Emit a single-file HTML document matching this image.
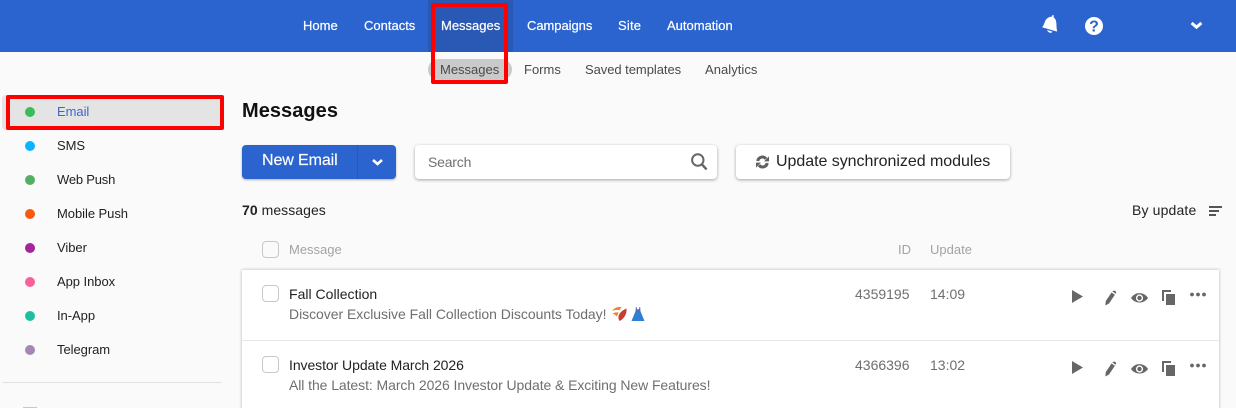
<!DOCTYPE html>
<html lang="en"><head><meta charset="utf-8"><title>Messages</title>
<style>
*{box-sizing:border-box}
html,body{margin:0;padding:0;width:1236px;height:408px;overflow:hidden}
body{background:#fafafa;font-family:"Liberation Sans",Arial,sans-serif;color:#202020}
#w{position:relative;width:1236px;height:408px;overflow:hidden;background:#fafafa}
.a{position:absolute;white-space:nowrap}
.n{color:#fff;font-size:13px;font-weight:400;top:18px;line-height:16px;-webkit-text-stroke:.2px #fff}
.s{color:#4a4a4a;font-size:13px;top:62px;line-height:16px}
.l{left:57px;font-size:13px;line-height:16px;color:#222;letter-spacing:-.05px}
.d{left:25px;width:10px;height:10px;border-radius:50%}
.cb{width:17px;height:17px;border:1px solid #c8c8c8;border-radius:4px;background:#fff}
.g{color:#6f6f6f}
svg{position:absolute;display:block}
</style></head><body><div id="w">
<div class="a" style="left:0;top:0;width:1236px;height:52px;background:#2c64cf"></div>
<div class="a" style="left:428px;top:0;width:85px;height:52px;background:#2a58b5"></div>
<div class="a n" style="left:303px">Home</div>
<div class="a n" style="left:364px">Contacts</div>
<div class="a n" style="left:441px">Messages</div>
<div class="a n" style="left:527px;letter-spacing:-.05px">Campaigns</div>
<div class="a n" style="left:618px;letter-spacing:.2px">Site</div>
<div class="a n" style="left:667px">Automation</div>
<svg style="left:1041px;top:15px" width="18" height="20" viewBox="0 0 18 20"><path d="M1 12.2 C3 10.5 3.5 6.8 5 4.6 C6.5 2.6 8.5 1.7 10.8 1.8 L11.4 0 L12.8.4 L12.6 2.4 C14.6 3.8 15.3 6 15.4 9 C15.5 11.5 15.6 14 16.2 16.6 Z" fill="#fff"/><path d="M6 15 L11.5 16.6 C10.8 18.6 7.2 18.2 6 15Z" fill="#fff"/></svg>
<svg style="left:1085px;top:17px" width="18" height="18" viewBox="0 0 18 18"><circle cx="9" cy="9" r="9" fill="#fff"/><text x="9" y="14.6" text-anchor="middle" font-family="Liberation Sans" font-weight="700" font-size="16" fill="#2c64cf">?</text></svg>
<svg style="left:1190px;top:21px" width="13" height="9" viewBox="0 0 13 9"><path d="M1.6 2 L6.5 6.2 L11.4 2" fill="none" stroke="#fff" stroke-width="3"/></svg>

<div class="a" style="left:428px;top:59px;width:84px;height:21px;border-radius:11px;background:#cacaca"></div>
<div class="a s" style="left:440px">Messages</div>
<div class="a s" style="left:524px">Forms</div>
<div class="a s" style="left:585px;letter-spacing:-.05px">Saved templates</div>
<div class="a s" style="left:705px;letter-spacing:.05px">Analytics</div>
<div class="a" style="left:431px;top:3px;width:77px;height:81px;border:4px solid #f00;border-radius:2px"></div>

<div class="a" style="left:2px;top:95px;width:220px;height:35px;background:#e4e4e4;border-radius:4px"></div>
<div class="a d" style="top:107px;background:#3dbb5a"></div><div class="a l" style="top:104px;color:#3a67c9">Email</div>
<div class="a d" style="top:141px;background:#0bb4ff"></div><div class="a l" style="top:138px">SMS</div>
<div class="a d" style="top:175px;background:#55ad66"></div><div class="a l" style="top:172px;letter-spacing:-.2px">Web Push</div>
<div class="a d" style="top:209px;background:#f85a0c"></div><div class="a l" style="top:206px">Mobile Push</div>
<div class="a d" style="top:243px;background:#a5249c"></div><div class="a l" style="top:240px">Viber</div>
<div class="a d" style="top:277px;background:#f9609a"></div><div class="a l" style="top:274px">App Inbox</div>
<div class="a d" style="top:311px;background:#1cc0a0"></div><div class="a l" style="top:308px">In-App</div>
<div class="a d" style="top:345px;background:#a488b3"></div><div class="a l" style="top:342px">Telegram</div>
<div class="a" style="left:6px;top:95px;width:218px;height:35px;border:4px solid #f00;border-radius:2px"></div>
<div class="a" style="left:2px;top:382px;width:220px;height:1px;background:#e0e0e0"></div>
<div class="a" style="left:23px;top:407px;width:14px;height:1px;background:#c8c8c8"></div>

<div class="a" style="left:242px;top:99px;font-size:20px;font-weight:700;line-height:24px;color:#111;letter-spacing:.05px">Messages</div>

<div class="a" style="left:242px;top:145px;width:154px;height:34px;background:#2c64cf;border-radius:4px;box-shadow:0 1px 2px rgba(0,0,0,.3)"></div>
<div class="a" style="left:357px;top:145px;width:1px;height:34px;background:#2858b8"></div>
<div class="a" style="left:262px;top:152px;font-size:16px;line-height:18px;color:#fff;letter-spacing:-.1px;-webkit-text-stroke:.15px #fff">New Email</div>
<svg style="left:371px;top:158px" width="13" height="9" viewBox="0 0 13 9"><path d="M2 2 L6.5 6 L11 2" fill="none" stroke="#fff" stroke-width="2.6"/></svg>

<div class="a" style="left:415px;top:145px;width:302px;height:34px;background:#fff;border-radius:4px;box-shadow:0 1px 3px rgba(0,0,0,.35)"></div>
<div class="a" style="left:428px;top:154px;font-size:14px;line-height:16px;color:#707070;letter-spacing:-.2px">Search</div>
<svg style="left:690px;top:152px" width="18" height="19" viewBox="0 0 18 19"><circle cx="7.8" cy="8" r="5.7" fill="none" stroke="#666" stroke-width="2"/><path d="M12 12.5 L16.6 17.4" stroke="#666" stroke-width="2.4"/></svg>

<div class="a" style="left:736px;top:145px;width:274px;height:34px;background:#fff;border-radius:4px;box-shadow:0 1px 3px rgba(0,0,0,.35)"></div>
<svg style="left:755px;top:155px" width="15" height="14" viewBox="0 0 15 14"><path d="M2.8 6 A4.6 4.6 0 0 1 11 3.8" fill="none" stroke="#5f5f5f" stroke-width="3"/><path d="M9 6.4 H14 V1.4Z" fill="#5f5f5f"/><path d="M12.2 8 A4.6 4.6 0 0 1 4 10.2" fill="none" stroke="#5f5f5f" stroke-width="3"/><path d="M6 7.6 H1 V12.6Z" fill="#5f5f5f"/></svg>
<div class="a" style="left:776px;top:153px;font-size:16px;line-height:18px;color:#222;letter-spacing:-.04px">Update synchronized modules</div>

<div class="a" style="left:242px;top:202px;font-size:14px;line-height:16px;color:#222;letter-spacing:.05px"><b>70</b> messages</div>
<div class="a" style="left:1132px;top:202px;font-size:14px;line-height:16px;color:#222;letter-spacing:.15px">By update</div>
<div class="a" style="left:1209px;top:206px;width:13px;height:2px;background:#555"></div>
<div class="a" style="left:1209px;top:210px;width:10px;height:2px;background:#555"></div>
<div class="a" style="left:1209px;top:214px;width:7px;height:2px;background:#555"></div>

<div class="a cb" style="left:262px;top:241px;background:#fafafa"></div>
<div class="a" style="left:289px;top:242px;font-size:13px;line-height:16px;color:#a3a3a3">Message</div>
<div class="a" style="left:898px;top:242px;font-size:13px;line-height:16px;color:#a3a3a3">ID</div>
<div class="a" style="left:930px;top:242px;font-size:13px;line-height:16px;color:#a3a3a3">Update</div>

<div class="a" style="left:242px;top:270px;width:977px;height:150px;background:#fff;box-shadow:0 0 3px rgba(0,0,0,.3)"></div>
<div class="a" style="left:242px;top:340px;width:977px;height:1px;background:#e6e6e6"></div>

<div class="a cb" style="left:262px;top:285px"></div>
<div class="a" style="left:289px;top:286px;font-size:14px;line-height:16px;color:#222;letter-spacing:.02px">Fall Collection</div>
<div class="a g" style="left:289px;top:306px;font-size:14px;line-height:16px;letter-spacing:-.04px">Discover Exclusive Fall Collection Discounts Today!</div>
<svg style="left:611px;top:306px" width="17" height="16" viewBox="0 0 17 16"><path d="M1 5 C3.5 1.5 7 .5 10.5 1 L8.5 4.2 C6 3.8 3.5 4 1 5Z M1.5 7.5 C3.5 6.5 5.5 6.3 7.5 6.5 L6 10.5 C4.5 9 3 8 1.5 7.5Z" fill="#ef8433"/><path d="M15.5 2.5 C16 7.5 13.5 12.5 8.5 15 C5.5 10.5 9 5 15.5 2.5Z" fill="#c73d2e"/></svg>
<svg style="left:631px;top:306px" width="14" height="16" viewBox="0 0 14 16"><path d="M4.8 1 H5.6 L6 3.2 H8 L8.4 1 H9.2 L9.4 5 L13.5 15 H.5 L4.6 5Z" fill="#2f7fd6"/><rect x="4.6" y="4.6" width="4.8" height="1" fill="#c73d5a"/></svg>
<div class="a g" style="left:855px;top:286px;font-size:14px;line-height:16px">4359195</div>
<div class="a g" style="left:930px;top:286px;font-size:14px;line-height:16px">14:09</div>

<div class="a cb" style="left:262px;top:356px"></div>
<div class="a" style="left:289px;top:357px;font-size:14px;line-height:16px;color:#222;letter-spacing:-.07px">Investor Update March 2026</div>
<div class="a g" style="left:289px;top:377px;font-size:14px;line-height:16px;letter-spacing:-.075px">All the Latest: March 2026 Investor Update &amp; Exciting New Features!</div>
<div class="a g" style="left:855px;top:357px;font-size:14px;line-height:16px">4366396</div>
<div class="a g" style="left:930px;top:357px;font-size:14px;line-height:16px">13:02</div>

<svg style="left:1060px;top:280px" width="150" height="30" viewBox="0 0 150 30"><path d="M12 10 L23 16.5 L12 23Z" fill="#666"/><path d="M45.3 25.5 L45.8 21 L51.5 12.5 L54.9 14.8 L49 23.5Z M52.3 11.3 L53.5 10.8 C54.5 10 56.8 11.5 56 13 L55.5 13.7Z" fill="#666"/><path d="M71 18 C75 11.5 84 11.5 88 18 C84 24 75 24 71 18Z" fill="#666"/><circle cx="79.5" cy="18" r="3.6" fill="#fff"/><circle cx="79.5" cy="18" r="2.2" fill="#666"/><path d="M102 10 H111 V12 H104 V21 H102Z" fill="#666"/><rect x="106" y="14" width="9" height="11" fill="#666"/><circle cx="132" cy="14.5" r="1.9" fill="#666"/><circle cx="138" cy="14.5" r="1.9" fill="#666"/><circle cx="144" cy="14.5" r="1.9" fill="#666"/></svg>
<svg style="left:1060px;top:351px" width="150" height="30" viewBox="0 0 150 30"><path d="M12 10 L23 16.5 L12 23Z" fill="#666"/><path d="M45.3 25.5 L45.8 21 L51.5 12.5 L54.9 14.8 L49 23.5Z M52.3 11.3 L53.5 10.8 C54.5 10 56.8 11.5 56 13 L55.5 13.7Z" fill="#666"/><path d="M71 18 C75 11.5 84 11.5 88 18 C84 24 75 24 71 18Z" fill="#666"/><circle cx="79.5" cy="18" r="3.6" fill="#fff"/><circle cx="79.5" cy="18" r="2.2" fill="#666"/><path d="M102 10 H111 V12 H104 V21 H102Z" fill="#666"/><rect x="106" y="14" width="9" height="11" fill="#666"/><circle cx="132" cy="14.5" r="1.9" fill="#666"/><circle cx="138" cy="14.5" r="1.9" fill="#666"/><circle cx="144" cy="14.5" r="1.9" fill="#666"/></svg>
</div></body></html>
